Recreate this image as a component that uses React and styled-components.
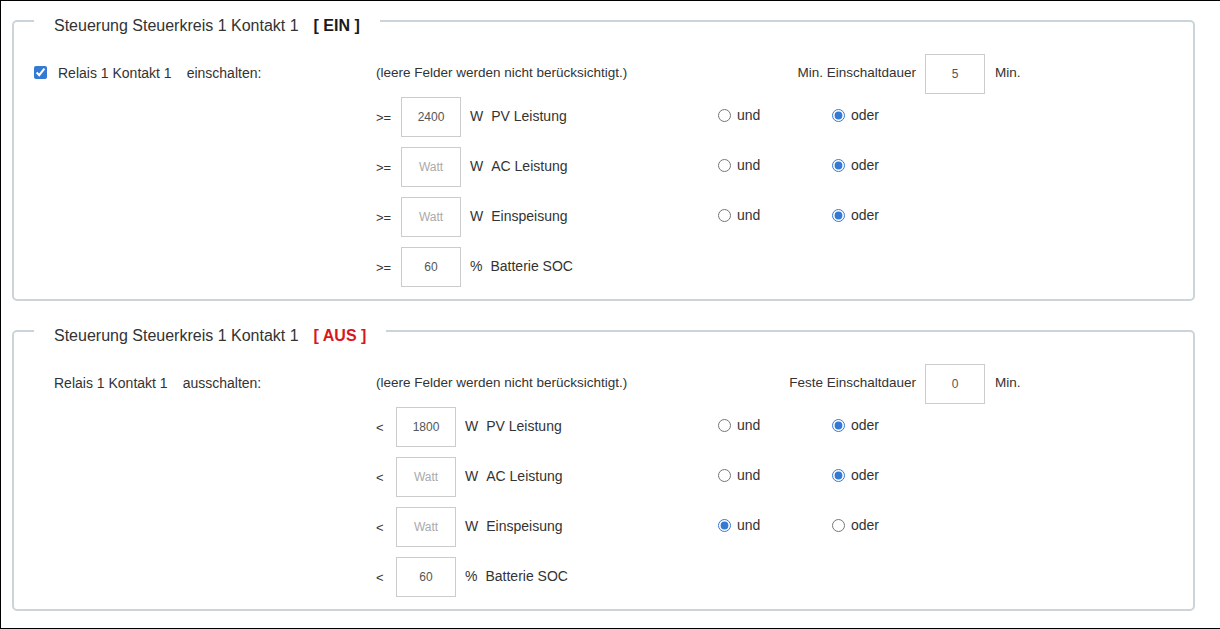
import styled, { createGlobalStyle } from 'styled-components'

const GlobalStyle = createGlobalStyle`
  html, body {
    margin: 0;
    padding: 0;
    background: #fff;
    overflow: hidden;
  }
  body {
    font-family: "Liberation Sans", Arial, sans-serif;
    color: #333;
  }
`

const Page = styled.div`
  box-sizing: border-box;
  height: 629px;
  border: 1px solid #000;
  border-right: none;
  padding: 4px 25px 0 11px;
`

const Section = styled.fieldset`
  margin: 0 0 ${({ $gap }) => $gap || 0}px;
  padding: 17px 20px 12px;
  border: 2px solid #cbd5d9;
  border-radius: 5px;
  min-width: 0;
`

const Legend = styled.legend`
  padding: 11px 20px 1px;
  font-size: 16px;
  line-height: 20px;
  color: #333;
`

const State = styled.span`
  margin-left: 15px;
  font-weight: bold;
  color: ${({ $off }) => ($off ? '#d8171d' : '#1a1a1a')};
`

const Body = styled.div`
  display: grid;
  grid-template-columns: 342px 1fr;
`

const LeftCol = styled.div`
  height: 40px;
  display: flex;
  align-items: center;
  padding-left: ${({ $indent }) => $indent || 0}px;
  padding-bottom: 3px;
  box-sizing: border-box;
  font-size: 14px;
`

const Check = styled.input`
  margin: 0 11px 0 0;
  width: 13px;
  height: 13px;
  accent-color: #3479d3;
`

const Action = styled.span`
  margin-left: 15px;
`

const RightCol = styled.div`
  display: flex;
  flex-direction: column;
  gap: 10px;
`

const HeaderRow = styled.div`
  display: flex;
  align-items: center;
  height: 40px;
  margin-bottom: -7px;
  font-size: 13.5px;
`

const Note = styled.span`
  width: 411px;
  padding-bottom: 3px;
`

const DurationLabel = styled.span`
  width: 129px;
  text-align: right;
  white-space: nowrap;
  padding-bottom: 3px;
`

const Field = styled.input`
  box-sizing: border-box;
  width: 60px;
  height: 40px;
  margin: 0;
  border: 1px solid #ccc;
  border-radius: 0;
  text-align: center;
  font-family: "Liberation Sans", Arial, sans-serif;
  font-size: 12px;
  color: #555;
  background: #fff;
  outline: none;

  &::placeholder {
    color: #aaa;
  }
`

const DurationField = styled(Field)`
  margin: 0 10px 0 9px;
`

const Unit = styled.span`
  padding-bottom: 3px;
`

const Row = styled.div`
  display: grid;
  grid-template-columns: 342px 114px auto;
  align-items: center;
  height: 40px;
  font-size: 14px;
`

const Condition = styled.div`
  display: flex;
  align-items: center;
`

const Op = styled.span`
  width: ${({ $w }) => $w}px;
  font-size: 13px;
`

const UnitSign = styled.span`
  margin-left: 9px;
  margin-right: 8px;
  padding-bottom: 3px;
`

const Label = styled.span`
  padding-bottom: 3px;
  white-space: nowrap;
`

const Choice = styled.label`
  display: flex;
  align-items: center;
  gap: 6px;
  padding-bottom: 4px;
`

const Radio = styled.input`
  margin: 0;
  width: 13px;
  height: 13px;
  accent-color: #3479d3;
`

const conditions = [
  { unit: 'W', label: 'PV Leistung', logic: true },
  { unit: 'W', label: 'AC Leistung', logic: true },
  { unit: 'W', label: 'Einspeisung', logic: true },
  { unit: '%', label: 'Batterie SOC', logic: false },
]

const sections = [
  {
    key: 'ein',
    state: '[ EIN ]',
    off: false,
    checkbox: true,
    action: 'einschalten:',
    durationLabel: 'Min. Einschaltdauer',
    duration: '5',
    op: '>=',
    opWidth: 25,
    values: ['2400', '', '', '60'],
    und: [false, false, false],
  },
  {
    key: 'aus',
    state: '[ AUS ]',
    off: true,
    checkbox: false,
    action: 'ausschalten:',
    durationLabel: 'Feste Einschaltdauer',
    duration: '0',
    op: '<',
    opWidth: 20,
    values: ['1800', '', '', '60'],
    und: [false, false, true],
  },
]

const ControlSection = ({ s, gap }) => (
  <Section $gap={gap}>
    <Legend>
      Steuerung Steuerkreis 1 Kontakt 1
      <State $off={s.off}>{s.state}</State>
    </Legend>
    <Body>
      <LeftCol $indent={s.checkbox ? 0 : 20}>
        {s.checkbox && <Check type="checkbox" defaultChecked />}
        <span>Relais 1 Kontakt 1</span>
        <Action>{s.action}</Action>
      </LeftCol>
      <RightCol>
        <HeaderRow>
          <Note>(leere Felder werden nicht berücksichtigt.)</Note>
          <DurationLabel>{s.durationLabel}</DurationLabel>
          <DurationField defaultValue={s.duration} />
          <Unit>Min.</Unit>
        </HeaderRow>
        {conditions.map((c, i) => (
          <Row key={c.label}>
            <Condition>
              <Op $w={s.opWidth}>{s.op}</Op>
              <Field
                defaultValue={s.values[i]}
                placeholder={c.unit === 'W' ? 'Watt' : ''}
              />
              <UnitSign>{c.unit}</UnitSign>
              <Label>{c.label}</Label>
            </Condition>
            {c.logic && (
              <>
                <Choice>
                  <Radio type="radio" name={`${s.key}-${i}`} defaultChecked={s.und[i]} />
                  und
                </Choice>
                <Choice>
                  <Radio type="radio" name={`${s.key}-${i}`} defaultChecked={!s.und[i]} />
                  oder
                </Choice>
              </>
            )}
          </Row>
        ))}
      </RightCol>
    </Body>
  </Section>
)

export default function App() {
  return (
    <>
      <GlobalStyle />
      <Page>
        <ControlSection s={sections[0]} gap={14} />
        <ControlSection s={sections[1]} />
      </Page>
    </>
  )
}
